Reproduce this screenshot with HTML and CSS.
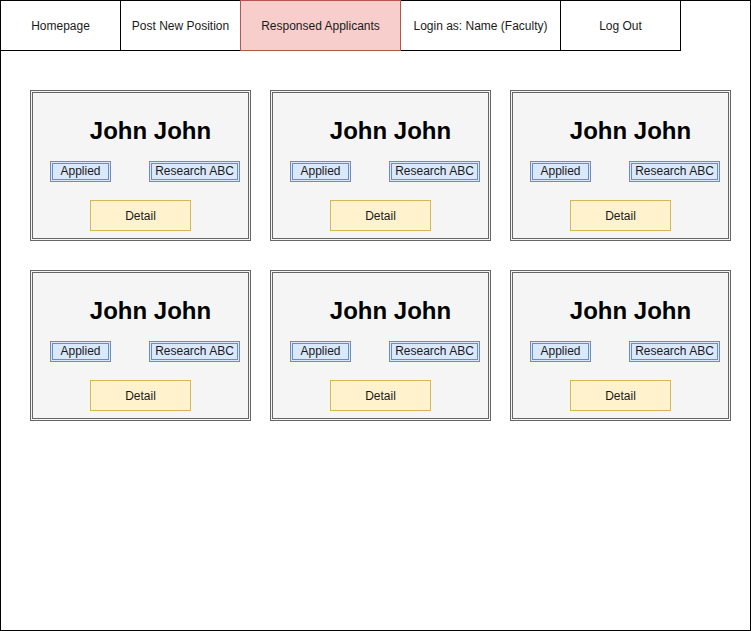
FILE: index.html
```html
<!DOCTYPE html>
<html>
<head>
<meta charset="utf-8">
<link rel="stylesheet" href="styles.css">
</head>
<body>
<div class="frame">
  <nav class="nav">
    <div class="tab w120">Homepage</div>
    <div class="tab w120">Post New Position</div>
    <div class="tab w160 active">Responsed Applicants</div>
    <div class="tab w160">Login as: Name (Faculty)</div>
    <div class="tab w120">Log Out</div>
  </nav>
  <main class="grid">
    <div class="card">
      <div class="name">John John</div>
      <div class="tags"><span class="tag applied">Applied</span><span class="tag research">Research ABC</span></div>
      <div class="detail">Detail</div>
    </div>
    <div class="card">
      <div class="name">John John</div>
      <div class="tags"><span class="tag applied">Applied</span><span class="tag research">Research ABC</span></div>
      <div class="detail">Detail</div>
    </div>
    <div class="card">
      <div class="name">John John</div>
      <div class="tags"><span class="tag applied">Applied</span><span class="tag research">Research ABC</span></div>
      <div class="detail">Detail</div>
    </div>
    <div class="card">
      <div class="name">John John</div>
      <div class="tags"><span class="tag applied">Applied</span><span class="tag research">Research ABC</span></div>
      <div class="detail">Detail</div>
    </div>
    <div class="card">
      <div class="name">John John</div>
      <div class="tags"><span class="tag applied">Applied</span><span class="tag research">Research ABC</span></div>
      <div class="detail">Detail</div>
    </div>
    <div class="card">
      <div class="name">John John</div>
      <div class="tags"><span class="tag applied">Applied</span><span class="tag research">Research ABC</span></div>
      <div class="detail">Detail</div>
    </div>
  </main>
</div>
</body>
</html>
```

FILE: styles.css
```css
* { box-sizing: border-box; }
html, body { margin: 0; padding: 0; background: #fff; }
body { font-family: "Liberation Sans", Arial, sans-serif; color: #1a1a1a; }

.frame {
  width: 751px;
  height: 631px;
  border: 1px solid #000;
}

.nav {
  display: flex;
  margin: -1px 0 0 -1px;
  height: 51px;
}

.tab {
  height: 51px;
  border: 1px solid #000;
  background: #fff;
  display: flex;
  align-items: center;
  justify-content: center;
  font-size: 12px;
  color: #1a1a1a;
  margin-right: -1px;
  position: relative;
}
.w120 { width: 121px; }
.w160 { width: 161px; }
.tab.active {
  background: #f8cecc;
  border-color: #b85450;
  z-index: 1;
}

.grid {
  display: grid;
  grid-template-columns: repeat(3, 221px);
  grid-auto-rows: 151px;
  column-gap: 19px;
  row-gap: 29px;
  padding: 39px 0 0 29px;
}

.card {
  border: 3px double #666;
  background: #f5f5f5;
  display: flex;
  flex-direction: column;
  padding-top: 24px;
}

.name {
  font-size: 24px;
  font-weight: bold;
  line-height: 28px;
  color: #000;
  text-align: center;
  padding-left: 20px;
}

.tags {
  display: flex;
  justify-content: space-between;
  margin-top: 16px;
  padding: 0 8px 0 17px;
}

.tag {
  height: 21px;
  border: 3px double #6c8ebf;
  background: #dae8fc;
  font-size: 12px;
  line-height: 15px;
  text-align: center;
}
.applied { width: 61px; }
.research { width: 91px; }

.detail {
  align-self: center;
  margin-top: 18px;
  width: 101px;
  height: 31px;
  border: 1px solid #d6b656;
  background: #fff2cc;
  font-size: 12px;
  display: flex;
  align-items: center;
  justify-content: center;
}
```
